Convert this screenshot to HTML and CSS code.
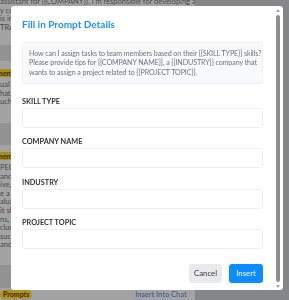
FILE: index.html
```html
<!DOCTYPE html>
<html>
<head>
<meta charset="utf-8">
<link rel="stylesheet" href="styles.css">
</head>
<body>
<div class="page">
  <div class="feed">
    <div class="card card-1">
      <p class="line">assistant for {{COMPANY}}. I'm responsible for developing a</p>
      <p class="line">y customer service strategy for our online store and</p>
      <p class="line">is in need of help with customer retention</p>
      <p class="line">TRATEGY TOPIC}} and {{AUDIENCE}}</p>
    </div>
    <div class="band band-1"></div>
    <div class="card card-2">
      <span class="badge">Environment</span>
      <p class="line">ual assistant for customers, what can</p>
      <p class="line">hat questions should I ask my clients</p>
      <p class="line">uch as a company</p>
    </div>
    <div class="band band-2"></div>
    <div class="card card-3">
      <span class="badge">Environment</span>
      <p class="line">PECIFIC PRODUCT</p>
      <p class="line">andidates and</p>
      <p class="line">ive, compelling</p>
      <p class="line">e a great list</p>
      <p class="line">aluable tips</p>
      <p class="line">it should be</p>
      <p class="line">ns, and for</p>
      <p class="line">clude the</p>
      <p class="line">success rate</p>
      <p class="line">and more</p>
    </div>
    <div class="band band-3"></div>
    <div class="footer-row">
      <span class="badge badge-small">Prompts</span>
      <span class="link">Insert Into Chat</span>
    </div>
  </div>
  <div class="side"></div>
</div>

<div class="overlay">
  <div class="modal">
    <div class="modal-body">
      <h2 class="title">Fill in Prompt Details</h2>
      <div class="preview">How can I assign tasks to team members based on their {{SKILL TYPE}} skills?<br>Please provide tips for {{COMPANY NAME}}, a {{INDUSTRY}} company that<br>wants to assign a project related to {{PROJECT TOPIC}}.</div>
      <div class="field">
        <label class="label">SKILL TYPE</label>
        <div class="input"></div>
      </div>
      <div class="field">
        <label class="label">COMPANY NAME</label>
        <div class="input"></div>
      </div>
      <div class="field">
        <label class="label">INDUSTRY</label>
        <div class="input"></div>
      </div>
      <div class="field">
        <label class="label">PROJECT TOPIC</label>
        <div class="input"></div>
      </div>
      <div class="actions">
        <button class="btn btn-cancel">Cancel</button>
        <button class="btn btn-insert">Insert</button>
      </div>
    </div>
    <div class="scrollbar">
      <span class="arrow arrow-up"></span>
      <span class="thumb"></span>
      <span class="arrow arrow-down"></span>
    </div>
  </div>
</div>
</body>
</html>
```

FILE: styles.css
```css
* { box-sizing: border-box; }
html, body {
  margin: 0;
  padding: 0;
  width: 289px;
  height: 300px;
  overflow: hidden;
  font-family: Lato, "Noto Sans", sans-serif;
}
.page {
  display: flex;
  width: 289px;
  height: 300px;
  background: #848688;
}
.feed {
  width: 195px;
  display: flex;
  flex-direction: column;
  overflow: hidden;
  background: #a3a3a3;
}
.side { flex: 1; background: #848688; }
.card {
  overflow: hidden;
  white-space: nowrap;
  color: #4a4a4a;
  font-size: 7.5px;
}
.line { margin: 0; line-height: 8.6px; }
.card-1 { height: 47px; margin-top: -2px; }
.card-2 { height: 62px; padding-top: 6px; }
.card-3 { height: 120px; padding-top: 5px; }
.band { background: #929292; }
.band-1 { height: 16px; }
.band-2 { height: 22px; }
.band-3 { height: 23px; }
.badge {
  display: inline-block;
  background: #a98b1f;
  color: #3a2f05;
  font-weight: 700;
  font-size: 7px;
  line-height: 8px;
  padding: 0 3px;
  border-radius: 4px;
  margin: 2px 0 4px -30px;
}
.footer-row {
  height: 10px;
  display: flex;
  align-items: center;
  font-size: 7.5px;
  white-space: nowrap;
}
.badge-small {
  margin: 2px 0 0 0;
  padding: 0 3px;
  border-radius: 5px;
  background: #b09020;
  line-height: 9px;
}
.link {
  margin-left: 103px;
  margin-top: 3px;
  color: #3b5590;
}

.overlay {
  position: fixed;
  inset: 0;
  padding: 6px 0 0 11px;
}
.modal {
  width: 272px;
  height: 284px;
  background: #fff;
  border-radius: 3px;
  display: flex;
  overflow: hidden;
}
.modal-body {
  flex: 1;
  padding: 12px 9px 7px 11px;
  display: flex;
  flex-direction: column;
}
.title {
  margin: 0;
  color: #1e8fff;
  font-size: 10px;
  line-height: 13px;
  font-weight: 700;
}
.preview {
  margin-top: 11px;
  height: 42px;
  background: #f8f9fa;
  border: 1px solid #f0f1f3;
  border-radius: 3px;
  padding: 6px 0 6px 6px;
  color: #6c757d;
  font-size: 7.1px;
  letter-spacing: -0.08px;
  line-height: 9.4px;
  white-space: nowrap;
}
.field {
  display: flex;
  flex-direction: column;
  margin-top: 9.33px;
}
.preview + .field { margin-top: 13px; }
.label {
  color: #333;
  font-size: 7.3px;
  font-weight: 700;
  line-height: 9px;
  margin-bottom: 2px;
}
.input {
  height: 20px;
  border: 1px solid #efefef;
  border-radius: 3px;
  background: #fff;
}
.actions {
  margin-top: 15px;
  display: flex;
  justify-content: flex-end;
  gap: 7px;
}
.btn {
  height: 19px;
  border: none;
  border-radius: 3px;
  font-family: inherit;
  font-size: 7.8px;
  padding: 0;
  line-height: 19px;
}
.btn-cancel { background: #e9eaed; color: #3a3a3a; width: 33px; }
.btn-insert { background: #0d8bff; color: #fff; width: 34px; }

.scrollbar {
  width: 11px;
  display: flex;
  flex-direction: column;
  align-items: center;
  padding: 3px 0 2px;
}
.arrow {
  width: 0;
  height: 0;
  border-left: 2.5px solid transparent;
  border-right: 2.5px solid transparent;
}
.arrow-up { border-bottom: 3px solid #a3a3a3; }
.arrow-down { border-top: 3px solid #a3a3a3; }
.thumb {
  flex: 1;
  width: 4px;
  margin: 3px 0;
  background: #8e8e8e;
  border-radius: 2px;
}
```
